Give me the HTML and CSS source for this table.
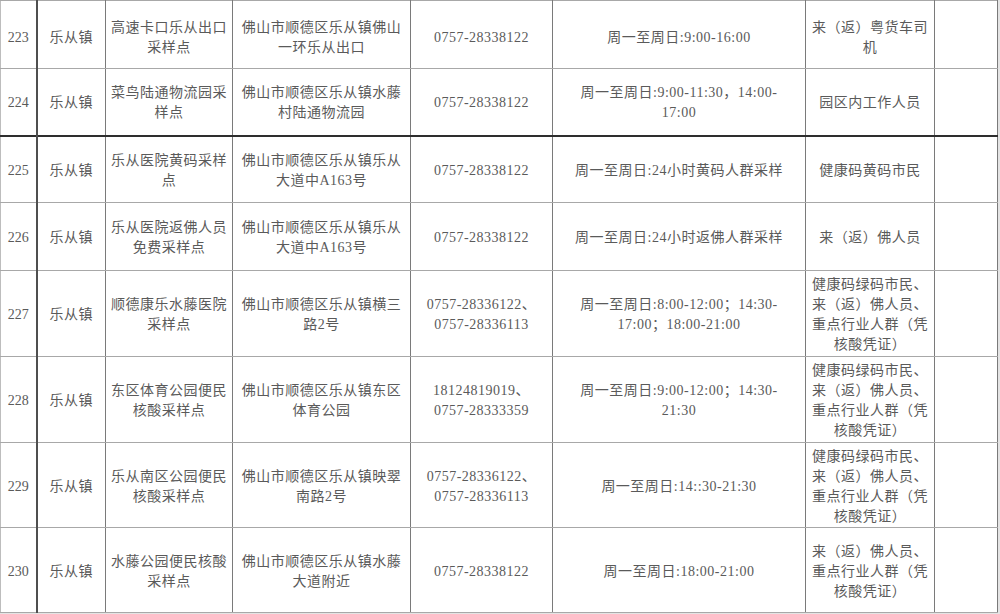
FILE: index.html
```html
<!DOCTYPE html>
<html lang="zh-CN">
<head>
<meta charset="utf-8">
<title>乐从镇核酸采样点</title>
<link rel="stylesheet" href="styles.css">
</head>
<body>
<table class="sites">
  <colgroup>
    <col class="c-no">
    <col class="c-town">
    <col class="c-name">
    <col class="c-addr">
    <col class="c-tel">
    <col class="c-time">
    <col class="c-who">
    <col class="c-note">
  </colgroup>
  <tbody>
    <tr class="h68 first">
      <td class="no">223</td><td class="town">乐从镇</td>
      <td>高速卡口乐从出口<br>采样点</td>
      <td>佛山市顺德区乐从镇佛山<br>一环乐从出口</td>
      <td>0757-28338122</td>
      <td>周一至周日:9:00-16:00</td>
      <td>来（返）粤货车司<br>机</td>
      <td></td>
    </tr>
    <tr class="h67">
      <td class="no">224</td><td class="town">乐从镇</td>
      <td>菜鸟陆通物流园采<br>样点</td>
      <td>佛山市顺德区乐从镇水藤<br>村陆通物流园</td>
      <td>0757-28338122</td>
      <td>周一至周日:9:00-11:30，14:00-<br>17:00</td>
      <td>园区内工作人员</td>
      <td></td>
    </tr>
    <tr class="h67 strong">
      <td class="no">225</td><td class="town">乐从镇</td>
      <td>乐从医院黄码采样<br>点</td>
      <td>佛山市顺德区乐从镇乐从<br>大道中A163号</td>
      <td>0757-28338122</td>
      <td>周一至周日:24小时黄码人群采样</td>
      <td>健康码黄码市民</td>
      <td></td>
    </tr>
    <tr class="h68">
      <td class="no">226</td><td class="town">乐从镇</td>
      <td>乐从医院返佛人员<br>免费采样点</td>
      <td>佛山市顺德区乐从镇乐从<br>大道中A163号</td>
      <td>0757-28338122</td>
      <td>周一至周日:24小时返佛人群采样</td>
      <td>来（返）佛人员</td>
      <td></td>
    </tr>
    <tr class="h86">
      <td class="no">227</td><td class="town">乐从镇</td>
      <td>顺德康乐水藤医院<br>采样点</td>
      <td>佛山市顺德区乐从镇横三<br>路2号</td>
      <td>0757-28336122、<br>0757-28336113</td>
      <td>周一至周日:8:00-12:00；14:30-<br>17:00；18:00-21:00</td>
      <td>健康码绿码市民、<br>来（返）佛人员、<br>重点行业人群（凭<br>核酸凭证）</td>
      <td></td>
    </tr>
    <tr class="h86">
      <td class="no">228</td><td class="town">乐从镇</td>
      <td>东区体育公园便民<br>核酸采样点</td>
      <td>佛山市顺德区乐从镇东区<br>体育公园</td>
      <td>18124819019、<br>0757-28333359</td>
      <td>周一至周日:9:00-12:00；14:30-<br>21:30</td>
      <td>健康码绿码市民、<br>来（返）佛人员、<br>重点行业人群（凭<br>核酸凭证）</td>
      <td></td>
    </tr>
    <tr class="h85">
      <td class="no">229</td><td class="town">乐从镇</td>
      <td>乐从南区公园便民<br>核酸采样点</td>
      <td>佛山市顺德区乐从镇映翠<br>南路2号</td>
      <td>0757-28336122、<br>0757-28336113</td>
      <td>周一至周日:14::30-21:30</td>
      <td>健康码绿码市民、<br>来（返）佛人员、<br>重点行业人群（凭<br>核酸凭证）</td>
      <td></td>
    </tr>
    <tr class="h85">
      <td class="no">230</td><td class="town">乐从镇</td>
      <td>水藤公园便民核酸<br>采样点</td>
      <td>佛山市顺德区乐从镇水藤<br>大道附近</td>
      <td>0757-28338122</td>
      <td>周一至周日:18:00-21:00</td>
      <td>来（返）佛人员、<br>重点行业人群（凭<br>核酸凭证）</td>
      <td></td>
    </tr>
  </tbody>
</table>
</body>
</html>
```

FILE: styles.css
```css
html, body {
  margin: 0;
  padding: 0;
}

body {
  background: #e4e4e4;
  width: 1000px;
  height: 614px;
  overflow: hidden;
}

.sites {
  border-collapse: collapse;
  table-layout: fixed;
  width: 997px;
  background: #ffffff;
  font-family: "Liberation Serif", "Noto Sans CJK SC", serif;
  font-size: 14px;
  letter-spacing: 0.5px;
  line-height: 20px;
  color: #5a5a5a;
}

.c-no { width: 36px; }
.c-town { width: 69px; }
.c-name { width: 127px; }
.c-addr { width: 178px; }
.c-tel { width: 142px; }
.c-time { width: 253px; }
.c-who { width: 129px; }
.c-note { width: 63px; }

.sites td {
  padding: 3px 2px 0;
  text-align: center;
  vertical-align: middle;
  white-space: nowrap;
  border-top: 1px solid #a8a8a8;
  border-bottom: 1px solid #a8a8a8;
  border-left: 1px solid #7a7a7a;
  border-right: 1px solid #7a7a7a;
}

.sites tr.first td {
  padding-top: 6px;
}

.sites td.no {
  border-left: 1px solid #bdbdbd;
  letter-spacing: 0;
}

.sites td.town {
  border-left: 2px solid #4f4f4f;
}

.sites tr.strong td {
  border-top: 2px solid #2e2e2e;
}

.h68 { height: 68px; }
.h67 { height: 67px; }
.h86 { height: 86px; }
.h85 { height: 85px; }
```
